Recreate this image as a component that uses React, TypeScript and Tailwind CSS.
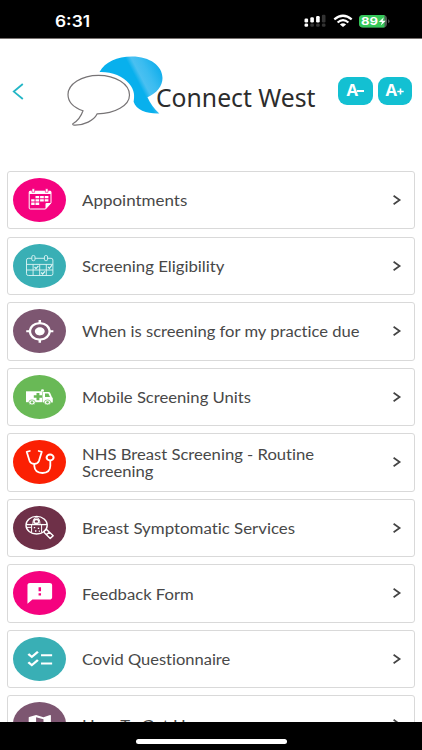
import React from 'react';
import { MdChecklist, MdFeedback, MdGpsFixed, MdMap } from 'react-icons/md';

interface MenuItem {
    label: React.ReactNode;
    color: string;
    stretch: string;
    icon: React.ReactNode;
}

const mdIcon = "w-[29.6px] h-[24.7px]";

const CalendarIcon = () => (
    <svg viewBox="0 0 53 44" className="w-full h-full" fill="none">
        <path d="M17.2 13.2H37.2Q38 13.2 38 14V25L32.5 31H17.2Q16.2 31 16.2 30V14.2Q16.2 13.2 17.2 13.2Z" stroke="white" strokeWidth="1" />
        <path d="M16.2 13H38V16H16.2ZM38 25L32.5 31V26Q32.5 25 33.5 25Z" fill="white" />
        <path d="M19 10.7h2.6v3.6h-2.6zM32.4 10.7h2.6v3.6h-2.6z" fill="white" stroke="#f5027f" strokeWidth="0.6" />
        <path d="M22.5 18H26.2V20.2H22.5ZM27.1 18H30.8V20.2H27.1ZM31.7 18H35.4V20.2H31.7ZM18.2 21.2H21.6V23.6H18.2ZM22.5 21.2H26.2V23.6H22.5ZM27.1 21.2H30.8V23.6H27.1ZM31.7 21.2H35.4V23.6H31.7ZM18.2 24.6H21.6V27H18.2ZM22.5 24.6H26.2V27H22.5Z" fill="white" />
    </svg>
);

const EligibilityIcon = () => (
    <svg viewBox="0 0 53 44" className="w-full h-full" fill="none" stroke="#dff5f5" strokeWidth="0.9">
        <rect x="13.5" y="14.3" width="26.4" height="17.2" rx="1.8" />
        <path d="M13.5 20.4H39.9M13.5 26H39.9M20.1 20.4V31.5M26.7 20.4V31.5M33.3 20.4V31.5" />
        <rect x="18.8" y="11.5" width="3.2" height="5.2" rx="1.4" fill="#39afb5" />
        <rect x="31.4" y="11.5" width="3.2" height="5.2" rx="1.4" fill="#39afb5" />
        <path d="M21.6 23L23 24.6L25.4 21.8M35 22.8L36.4 24.4L39 21.2M28.2 28.5L29.6 30L32 27.4" strokeWidth="1.2" />
    </svg>
);

const AmbulanceIcon = () => (
    <svg viewBox="0 0 53 44" className="w-full h-full">
        <path d="M13 16.3H29.5V27.2H13Z" fill="white" />
        <path d="M30 17H35.6Q36.7 17 37.3 18.2L39 22.2L39.8 23V27.6H30Z" fill="white" />
        <path d="M28 15.6Q28 14.2 29.5 14.2Q31 14.2 31 15.6V16.5H28Z" fill="white" />
        <path d="M32 18.5H35.4L37 22H32Z" fill="#69b956" />
        <path d="M23.5 18H26.4V20.3H29V22.8H26.4V25.2H23.5V22.8H20.8V20.3H23.5Z" fill="#69b956" />
        <g fill="white" stroke="#69b956" strokeWidth="0.7">
            <ellipse cx="19" cy="27.4" rx="3.2" ry="2.5" />
            <ellipse cx="34.5" cy="27.4" rx="3.2" ry="2.5" />
        </g>
        <ellipse cx="19" cy="27.4" rx="1.4" ry="1.1" fill="#69b956" />
        <ellipse cx="34.5" cy="27.4" rx="1.4" ry="1.1" fill="#69b956" />
    </svg>
);

const StethoscopeIcon = () => (
    <svg viewBox="0 0 53 44" className="w-full h-full" fill="none" stroke="white" strokeWidth="1.8" strokeLinecap="round" strokeLinejoin="round">
        <path d="M16.8 11L13.7 11.8L16.6 21Q17.6 23.8 21.3 23.8Q24.9 23.8 25.9 21L28.8 11.8L25.7 11" />
        <path d="M21.3 23.8V26Q21.8 33 29.5 33Q37 33 37.3 26V21" />
        <ellipse cx="37.1" cy="17.5" rx="3.5" ry="2.9" strokeWidth="2" />
    </svg>
);

const SearchIcon = () => (
    <svg viewBox="0 0 53 44" className="w-full h-full" fill="none" stroke="white" strokeWidth="1.4">
        <ellipse cx="23.6" cy="19.2" rx="10.6" ry="8.8" />
        <path d="M13 18.6H34.2" strokeWidth="1.3" />
        <ellipse cx="23.4" cy="15.4" rx="2.4" ry="2" strokeWidth="1.6" />
        <path d="M19.8 18.4Q19.8 11.6 23.4 11.6Q27 11.6 27 18.4" strokeWidth="0.9" />
        <path d="M18.6 19V26.5M28.6 19V26.5M13.6 21.4H18" strokeWidth="1" />
        <path d="M20.8 21.6h1.4M24.8 22.4h1.4M22 25h1.4M25.8 25.2h1" />
        <path d="M31.2 25L33.6 23.4L40.2 29.8L37.2 32.4L31.2 26.6ZM33.4 28.6L36.3 26.2" strokeLinejoin="round" />
    </svg>
);

const menuItems: MenuItem[] = [
    { label: "Appointments", color: "bg-[#f5027f]", stretch: "scale-x-[1.17]", icon: <CalendarIcon /> },
    { label: "Screening Eligibility", color: "bg-[#39afb5]", stretch: "scale-x-[1.155]", icon: <EligibilityIcon /> },
    { label: "When is screening for my practice due", color: "bg-[#7d5671]", stretch: "scale-x-[1.143]", icon: <MdGpsFixed preserveAspectRatio="none" className={mdIcon} /> },
    { label: "Mobile Screening Units", color: "bg-[#69b956]", stretch: "scale-x-[1.147]", icon: <AmbulanceIcon /> },
    { label: <>NHS Breast Screening - Routine<br />Screening</>, color: "bg-[#fb2003]", stretch: "scale-x-[1.147]", icon: <StethoscopeIcon /> },
    { label: "Breast Symptomatic Services", color: "bg-[#6e3048]", stretch: "scale-x-[1.162]", icon: <SearchIcon /> },
    { label: "Feedback Form", color: "bg-[#f5027f]", stretch: "scale-x-[1.148]", icon: <MdFeedback preserveAspectRatio="none" className={mdIcon} /> },
    { label: "Covid Questionnaire", color: "bg-[#39afb5]", stretch: "scale-x-[1.138]", icon: <MdChecklist preserveAspectRatio="none" className={mdIcon} /> },
    { label: "How To Get Here", color: "bg-[#7d5671]", stretch: "scale-x-[1.15]", icon: <MdMap preserveAspectRatio="none" className={mdIcon} /> },
];

const StatusBar = () => (
    <div className="h-[38.5px] shrink-0 bg-black border-b border-[#77716f] flex items-start justify-between pl-[55px] pr-[32px] text-white">
        <span className="mt-[11.5px] font-['Inter'] font-semibold text-[15.5px] leading-5 origin-left scale-x-[1.12]">6:31</span>
        <div className="flex items-center mt-[13px]">
            <svg width="22" height="15" viewBox="0 0 22 15" fill="white">
                <rect x="0.5" y="5.5" width="3.6" height="4" rx="1.2" />
                <rect x="6.3" y="4.3" width="3.6" height="5.2" rx="1.2" />
                <rect x="12.1" y="3" width="3.6" height="6.5" rx="1.2" />
                <rect x="17.9" y="1.7" width="3.6" height="7.8" rx="1.2" fill="#333" />
                <rect x="0.5" y="10.6" width="3.6" height="3.2" rx="1.2" />
                <rect x="6.3" y="10.6" width="3.6" height="3.2" rx="1.2" fill="#333" />
                <rect x="12.1" y="10.6" width="3.6" height="3.2" rx="1.2" fill="#333" />
                <rect x="17.9" y="10.6" width="3.6" height="3.2" rx="1.2" fill="#333" />
            </svg>
            <svg className="ml-[7px]" width="20" height="14" viewBox="0 0 20 14" fill="none" stroke="white" strokeWidth="2.2">
                <path d="M1.3 5.4Q10 -1.9 18.7 5.4" />
                <path d="M4.6 8.5Q10 3.9 15.4 8.5" />
                <path d="M10 13L6.9 10.5Q10 8.2 13.1 10.5Z" fill="white" stroke="none" />
            </svg>
            <svg className="ml-[6.5px]" width="31" height="14" viewBox="0 0 31 14">
                <rect x="0" y="1" width="28" height="12.4" rx="4" fill="#4b5a50" />
                <path d="M4 1H25.5V13.4H4Q0 13.4 0 9.4V5Q0 1 4 1Z" fill="#35c759" />
                <path d="M29 5.2Q30.6 5.8 30.6 7.2Q30.6 8.6 29 9.2Z" fill="#4b4b4b" />
                <text x="2" y="11.2" textLength="17" lengthAdjust="spacingAndGlyphs" fontFamily="Inter, sans-serif" fontSize="11" fontWeight="700" fill="white">89</text>
                <path d="M24.8 3.2L19.8 7.9H23L21.8 11.6L26.8 6.7H23.6Z" fill="white" />
            </svg>
        </div>
    </div>
);

const Logo = () => (
    <svg width="252" height="74" viewBox="66 54 252 74" className="shrink-0">
        <defs>
            <linearGradient id="shine" gradientUnits="userSpaceOnUse" x1="139" y1="84" x2="162" y2="72">
                <stop offset="0" stopColor="#08b0ed" />
                <stop offset="0.2" stopColor="#4ac0f1" />
                <stop offset="0.5" stopColor="#3bbcf0" />
                <stop offset="1" stopColor="#10aeec" />
            </linearGradient>
        </defs>
        <path d="M99.5 72C105 62 117 56.5 132 56.5C150 56.5 162.5 66 162.5 78C162.5 86 157 93 147.5 97.3C150 103 154 109 159.3 113.5C148 114 136 110.5 133.6 101.8C134.5 97 135 90 129 83.5C123 76 111 71.5 99.5 72Z" fill="url(#shine)" />
        <path d="M98.5 75.3C115.5 75.3 129.5 84 129.5 95C129.5 105.5 115 113.8 97.2 113.8C94 120.5 84 125.5 74 125.1C72.5 125 72.2 124 73.5 123.3C78.5 120.3 81.5 115 83 110.8C73.5 107.5 68 101.5 68 94.5C68 84 81.5 75.3 98.5 75.3Z" fill="white" stroke="#777476" strokeWidth="1.2" />
        <text x="156" y="107.3" textLength="159.5" lengthAdjust="spacingAndGlyphs" fontFamily="Noto Sans, sans-serif" fontSize="24.5" fill="#2c2c2c">Connect West</text>
    </svg>
);

const Header = () => (
    <div className="h-[132.5px] shrink-0 flex items-start pl-3 pr-[10px]">
        <svg className="mt-[43px] shrink-0" width="13" height="19" viewBox="0 0 13 19" fill="none" stroke="#23b6c6" strokeWidth="1.8">
            <path d="M10.8 2L1.8 9.6L10.8 17" />
        </svg>
        <div className="ml-[41px] mt-[15.5px]"><Logo /></div>
        <div className="flex gap-[5px] ml-auto mt-[38.5px] text-white font-['Open_Sans'] font-bold">
            <button className="w-[34.5px] h-7 rounded-[9px] bg-[#13c0d2] flex items-center justify-center">
                <span className="text-[15.5px] leading-none scale-x-[1.08]">A</span>
                <span className="w-[6.5px] h-[1.7px] bg-white" />
            </button>
            <button className="w-[34.5px] h-7 rounded-[9px] bg-[#13c0d2] flex items-center justify-center">
                <span className="text-[15.5px] leading-none scale-x-[1.08]">A</span>
                <svg width="7" height="7" viewBox="0 0 7 7" stroke="white" strokeWidth="1.6"><path d="M0.3 3.5H6.7M3.5 0.5V6.5" /></svg>
            </button>
        </div>
    </div>
);

const App: React.FC = () => {
    return (
        <div className="w-full h-[750px] flex flex-col bg-white overflow-hidden">
            <StatusBar />
            <Header />
            <div className="flex-1 min-h-0 overflow-hidden flex flex-col gap-[7.1px] px-[7px]">
                {menuItems.map((item, index) => (
                    <div key={index} className="h-[58.45px] shrink-0 border border-[#d9d9d9] rounded-[3px] flex items-center pl-[5px] pr-[12px]">
                        <div className={`w-[53px] h-[44px] rounded-[50%] shrink-0 flex items-center justify-center text-white ${item.color}`}>
                            {item.icon}
                        </div>
                        <span className={`ml-[16px] mt-[1.2px] whitespace-nowrap font-['Lato'] text-[14.5px] leading-[17px] text-[#484848] [font-variant-ligatures:none] origin-left ${item.stretch}`}>{item.label}</span>
                        <svg className="ml-auto shrink-0" width="10" height="12" viewBox="0 0 10 12" fill="none" stroke="#444" strokeWidth="1.7">
                            <path d="M1.6 1.8L7.6 6L1.6 10.2" />
                        </svg>
                    </div>
                ))}
            </div>
            <div className="h-[28px] shrink-0 bg-black flex justify-center">
                <div className="w-[151px] h-[4.5px] mt-[17px] rounded-full bg-white" />
            </div>
        </div>
    )
}

export default App;
